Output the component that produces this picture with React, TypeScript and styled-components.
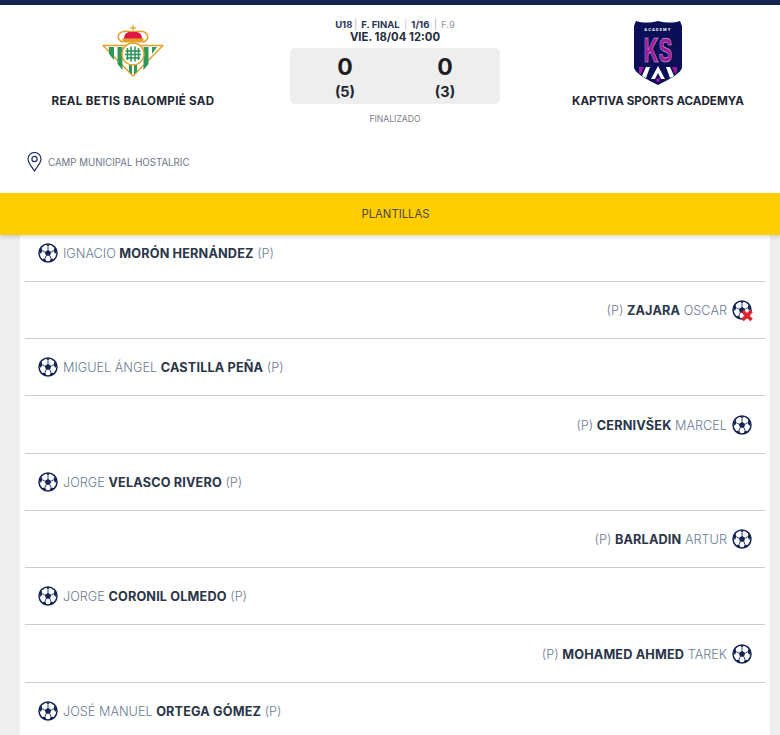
import React from "react";
import styled, { createGlobalStyle } from "styled-components";

const Global = createGlobalStyle`
  html, body { margin: 0; padding: 0; background: #eeeeee; height: 735px; overflow: hidden; }
  body { font-family: "Inter", "Liberation Sans", sans-serif; }
`;

const Page = styled.div`
  width: 780px;
  height: 735px;
  overflow: hidden;
  background: #eeeeee;
`;
const TopBar = styled.div`
  height: 5px;
  background: #152552;
`;
const Header = styled.header`
  height: 188px;
  background: #ffffff;
  display: flex;
  flex-direction: column;
`;
const Teams = styled.div`
  display: grid;
  grid-template-columns: 290px 210px 280px;
  height: 130px;
`;
const Team = styled.div<{ $left?: number; $right?: number }>`
  display: flex;
  flex-direction: column;
  align-items: center;
  padding: 0 ${(p) => p.$right ?? 0}px 0 ${(p) => p.$left ?? 0}px;
`;
const Crest = styled.div<{ $top: number; $h: number }>`
  height: ${(p) => p.$h}px;
  margin-top: ${(p) => p.$top}px;
  display: flex;
  align-items: flex-start;
  justify-content: center;
`;
const TeamName = styled.div<{ $track?: number }>`
  font-size: 11.6px;
  font-weight: 700;
  letter-spacing: ${(p) => p.$track ?? 0}px;
  color: #1f2733;
  line-height: 14px;
  white-space: nowrap;
`;
const Center = styled.div`
  display: flex;
  flex-direction: column;
  align-items: center;
  padding-top: 14px;
`;
const Meta = styled.div`
  display: flex;
  align-items: center;
  font-size: 9.5px;
  line-height: 12px;
  font-weight: 700;
  color: #2a3552;
  white-space: nowrap;
`;
const Sep = styled.span<{ $c: string }>`
  font-weight: 300;
  color: ${(p) => p.$c};
  margin: 0 4px 0 2px;
`;
const MetaLight = styled.span`
  font-weight: 400;
  color: #8e96a6;
`;
const DateLine = styled.div`
  font-size: 11.3px;
  line-height: 13px;
  font-weight: 700;
  color: #222b3a;
`;
const ScoreBox = styled.div`
  width: 210px;
  height: 56px;
  margin-top: 4px;
  background: #eeeeee;
  border-radius: 5px;
  display: grid;
  grid-template-columns: 1fr 1fr;
  justify-items: center;
  padding: 7px 5px 0;
  box-sizing: border-box;
`;
const ScoreCol = styled.div`
  display: flex;
  flex-direction: column;
  align-items: center;
`;
const Goals = styled.div`
  font-size: 23px;
  line-height: 25px;
  font-weight: 700;
  color: #1d1d1f;
`;
const Penalties = styled.div`
  font-size: 14.5px;
  line-height: 23px;
  font-weight: 700;
  color: #1f2530;
`;
const Status = styled.div`
  margin-top: 10px;
  font-size: 8.6px;
  line-height: 11px;
  color: #7a7f8a;
`;
const Venue = styled.div`
  display: flex;
  align-items: center;
  gap: 6px;
  padding: 17px 0 0 27px;
  font-size: 9.7px;
  color: #6e7688;
`;
const YellowBar = styled.div`
  height: 42px;
  background: #ffcd00;
  display: flex;
  align-items: center;
  justify-content: center;
  padding-left: 11px;
  font-size: 11.3px;
  color: #4a4a3a;
  position: relative;
  box-shadow: 0 2px 4px rgba(0, 0, 0, 0.15);
`;
const Sheet = styled.section`
  width: 750px;
  margin-left: 20px;
  background: #ffffff;
  padding: 0 5px;
  box-sizing: border-box;
  height: 500px;
`;
const Row = styled.div<{ $right?: boolean; $h: number }>`
  height: ${(p) => p.$h}px;
  box-sizing: border-box;
  border-bottom: 1px solid #cccccc;
  display: flex;
  align-items: flex-end;
  justify-content: ${(p) => (p.$right ? "flex-end" : "flex-start")};
  padding: 0 13px 18px 13px;
`;
const Entry = styled.div`
  display: flex;
  align-items: center;
  gap: 5px;
  height: 20px;
  font-size: 12.7px;
  color: #6b7b93;
  font-weight: 300;
  white-space: nowrap;
`;
const Strong = styled.b`
  font-weight: 700;
  letter-spacing: 0.15px;
  color: #2a3548;
`;
const IconWrap = styled.span`
  position: relative;
  display: inline-flex;
  width: 20px;
  height: 20px;
`;
const Cross = styled.svg`
  position: absolute;
  right: -2px;
  bottom: -2px;
`;

const Ball = () => (
  <svg width="20" height="20" viewBox="0 0 20 20">
    <circle cx="10" cy="10" r="9" fill="#fff" stroke="#152552" strokeWidth="1.5" />
    <polygon points="10,6.8 13.2,9.1 12,12.8 8,12.8 6.800,9.1" fill="#152552" />
    <polygon points="7.200,1.300 12.800,1.300 10,3.200" fill="#152552" />
    <polygon points="1.200,8 3.400,4.600 4.400,7.800 2.800,11" fill="#152552" />
    <polygon points="18.800,8 16.600,4.600 15.600,7.800 17.200,11" fill="#152552" />
    <polygon points="4.400,16 7.200,15.400 8.400,18.400 6,18" fill="#152552" />
    <polygon points="15.600,16 12.800,15.400 11.600,18.400 14,18" fill="#152552" />
    <path d="M10 6.800V3.200M6.800 9.100 4.400 7.800M13.200 9.100l2.400-1.300M8 12.800l-.8 2.600M12 12.800l.8 2.600" stroke="#152552" strokeWidth="0.9" />
  </svg>
);

const BallIcon = ({ off }: { off?: boolean }) => (
  <IconWrap>
    <Ball />
    {off && (
      <Cross width="14" height="13" viewBox="0 0 14 13">
        <path d="M2.500 2l9 9M11.500 2l-9 9" stroke="#e0242c" strokeWidth="3.600" />
      </Cross>
    )}
  </IconWrap>
);

const BetisCrest = () => (
  <svg width="62" height="54" viewBox="0 0 62 54">
    <path d="M31 0v8" stroke="#e4a02a" strokeWidth="1.300" />
    <path d="M28 3h6" stroke="#e4a02a" strokeWidth="1.200" />
    <path d="M21 17c-4-1-6-4-4-8 3-4 9-3 14-2 5-1 11-2 14 2 2 4 0 7-4 8" fill="#fff" stroke="#e4a02a" strokeWidth="1.500" />
    <path d="M22 14c0-3 1-6 5-7h8c4 1 5 4 5 7z" fill="#e0183f" />
    <path d="M20 13.500h22l-1.500 4h-19z" fill="#e4a02a" />
    <path d="M1 20.500h60L31 51z" fill="#fff" stroke="#e4a02a" strokeWidth="1.400" strokeLinejoin="round" />
    <path d="M7 22h5v13l-5-6zM15.500 22h5v23l-5-6zM41.500 22h5v17l-5 6zM50 22h5l-5 7zM27 38h3v11.500l-3-3zM32 38h3v8.500l-3 3z" fill="#2f9a57" />
    <circle cx="31" cy="29" r="11" fill="#fff" stroke="#e4a02a" strokeWidth="1.300" />
    <path d="M25.500 23v12M29 21.500v15M33 21.500v15M36.500 23v12M23.500 26h15M23 29.500h16M24 33h14" stroke="#2a9257" strokeWidth="1.500" fill="none" />
  </svg>
);

const KsCrest = () => (
  <svg width="50" height="66" viewBox="0 0 50 66">
    <path d="M3 1c7 2 13 2 22 0 9 2 15 2 22 0l2 5v41c0 6-14 13-24 18C15 60 1 53 1 47V6z" fill="#0a0f57" />
    <text x="25" y="11" fontSize="3.800" fill="#fff" textAnchor="middle" fontFamily="Inter" fontWeight="700" letterSpacing="1.100">ACADEMY</text>
    <g transform="translate(25 42) scale(0.66 1)">
      <text x="0" y="0" fontSize="32" fill="#a0189a" stroke="#d9c7e6" strokeWidth="0.500" textAnchor="middle" fontFamily="Inter" fontWeight="700">KS</text>
    </g>
    <path d="M25 46l7 13h-4l-3-6-3 6h-4z" fill="#fff" />
    <path d="M13 47h4l-4 11-4-2zM33 47h4l4 9-4 2z" fill="#fff" />
    <path d="M6 47h5l-3 7-2-1zM39 47h5v5l-2 2z" fill="#a0189a" />
    <circle cx="25" cy="60" r="2" fill="#a0189a" />
  </svg>
);

const Pin = () => (
  <svg width="15" height="20" viewBox="0 0 15 20" fill="none" stroke="#1f2c5c" strokeWidth="1.200">
    <path d="M7.500 19C5 15 1 11 1 7a6.500 6.500 0 0 1 13 0c0 4-4 8-6.500 12z" />
    <circle cx="7.500" cy="7" r="2.600" />
  </svg>
);

type P = { right?: boolean; first?: string; last: string; off?: boolean };
const players: P[] = [
  { first: "IGNACIO", last: "MORÓN HERNÁNDEZ" },
  { right: true, first: "OSCAR", last: "ZAJARA", off: true },
  { first: "MIGUEL ÁNGEL", last: "CASTILLA PEÑA" },
  { right: true, first: "MARCEL", last: "CERNIVŠEK" },
  { first: "JORGE", last: "VELASCO RIVERO" },
  { right: true, first: "ARTUR", last: "BARLADIN" },
  { first: "JORGE", last: "CORONIL OLMEDO" },
  { right: true, first: "TAREK", last: "MOHAMED AHMED" },
  { first: "JOSÉ MANUEL", last: "ORTEGA GÓMEZ" },
];
const heights = [47, 57, 57, 58, 57, 57, 57, 58, 57];

export default function App() {
  return (
    <Page>
      <Global />
      <TopBar />
      <Header>
        <Teams>
          <Team $right={24}>
            <Crest $top={20} $h={69}><BetisCrest /></Crest>
            <TeamName $track={0.3}>REAL BETIS BALOMPIÉ SAD</TeamName>
          </Team>
          <Center>
            <Meta>
              U18<Sep $c="#8a93a8">|</Sep> F. FINAL <Sep $c="#d8a0a8">&nbsp;|</Sep> 1/16 <Sep $c="#8a93a8">&nbsp;|</Sep><MetaLight>F.9</MetaLight>
            </Meta>
            <DateLine>VIE. 18/04 12:00</DateLine>
            <ScoreBox>
              <ScoreCol><Goals>0</Goals><Penalties>(5)</Penalties></ScoreCol>
              <ScoreCol><Goals>0</Goals><Penalties>(3)</Penalties></ScoreCol>
            </ScoreBox>
            <Status>FINALIZADO</Status>
          </Center>
          <Team $left={36}>
            <Crest $top={15} $h={74}><KsCrest /></Crest>
            <TeamName>KAPTIVA SPORTS ACADEMYA</TeamName>
          </Team>
        </Teams>
        <Venue><Pin />CAMP MUNICIPAL HOSTALRIC</Venue>
      </Header>
      <YellowBar>PLANTILLAS</YellowBar>
      <Sheet>
        {players.map((p, i) => (
          <Row key={i} $right={p.right} $h={heights[i]}>
            <Entry>
              {p.right ? (
                <>
                  <span>(P) <Strong>{p.last}</Strong> {p.first}</span>
                  <BallIcon off={p.off} />
                </>
              ) : (
                <>
                  <BallIcon />
                  <span>{p.first} <Strong>{p.last}</Strong> (P)</span>
                </>
              )}
            </Entry>
          </Row>
        ))}
      </Sheet>
    </Page>
  );
}
